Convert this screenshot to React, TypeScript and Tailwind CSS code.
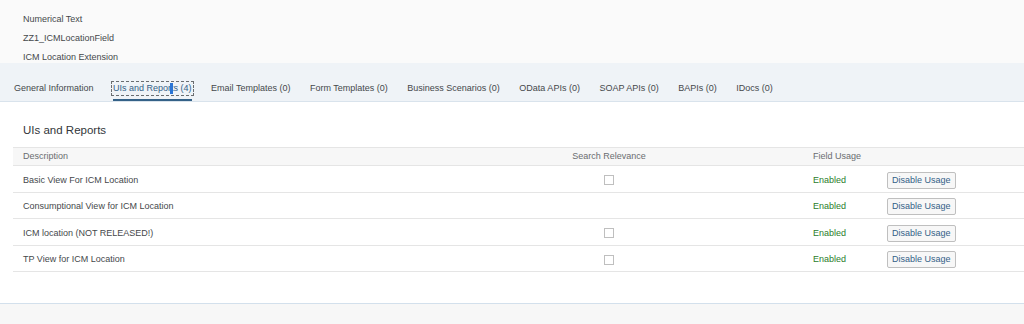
import React from "react";

const TABS = [
  "General Information",
  "UIs and Reports (4)",
  "Email Templates (0)",
  "Form Templates (0)",
  "Business Scenarios (0)",
  "OData APIs (0)",
  "SOAP APIs (0)",
  "BAPIs (0)",
  "IDocs (0)",
];

const ROWS = [
  { name: "Basic View For ICM Location", check: true },
  { name: "Consumptional View for ICM Location", check: false },
  { name: "ICM location (NOT RELEASED!)", check: true },
  { name: "TP View for ICM Location", check: true },
];

export default function App() {
  return (
    <div
      className="w-[1024px] h-[324px] overflow-hidden bg-[#f7f7f7] text-[#45484b]"
      style={{ fontFamily: '"Liberation Sans", Arial, sans-serif' }}
    >
      {/* header info */}
      <div className="bg-[#fafafa] h-[63px] pl-[23px] pt-[14px] flex flex-col gap-[8px] text-[9px] leading-[11px]">
        <div>Numerical Text</div>
        <div>ZZ1_ICMLocationField</div>
        <div>ICM Location Extension</div>
      </div>

      {/* tab bar */}
      <div className="bg-[#eff3f7] h-[39px] border-b border-[#d9e3ec] flex items-end pl-[14px] gap-[19.5px] text-[9px]">
        {TABS.map((t, i) => (
          <div
            key={t}
            className={
              i === 1
                ? "relative h-full flex items-end pb-[4px] text-[#346187] border-b-2 border-[#346187]"
                : "h-full flex items-end pb-[6px] text-[#45484b]"
            }
          >
            {i === 1 ? (
              <span className="relative outline outline-1 outline-dashed outline-[#6a6d70] leading-[13px] px-[1px] -mx-[1px]">
                {t}
                <span className="absolute left-[58px] top-[1px] w-[3px] h-[11px] bg-[#2a74d5]" />
              </span>
            ) : (
              <span className="leading-[13px]">{t}</span>
            )}
          </div>
        ))}
      </div>

      {/* content */}
      <div className="bg-white h-[202px] border-b border-[#d3e0ec] pl-[13px]">
        <div className="pl-[10px] pt-[20px] h-[45px] text-[11.5px] text-[#32363a]">UIs and Reports</div>
        <div className="grid grid-cols-[540px_112px_138px_1fr] h-[19px] bg-[#f7f7f7] border-y border-[#e5e5e5] text-[9px] text-[#6a6d70] items-center">
          <div className="pl-[10px]">Description</div>
          <div className="text-center">Search Relevance</div>
          <div />
          <div className="pl-[10px]">Field Usage</div>
        </div>
        {ROWS.map((r) => (
          <div
            key={r.name}
            className="grid grid-cols-[540px_112px_138px_1fr] h-[26.5px] pt-[3px] border-b border-[#e5e5e5] text-[9px] items-center"
          >
            <div className="pl-[10px]">{r.name}</div>
            <div className="flex justify-center">
              {r.check && <div className="w-[10px] h-[10px] border border-[#bfbfbf] bg-white" />}
            </div>
            <div />
            <div className="pl-[10px] flex items-center">
              <span className="w-[74px] text-[#2b7d2b]">Enabled</span>
              <button className="h-[17px] px-[4px] border border-[#bfbfbf] rounded-[2px] bg-[#f7f7f7] text-[#346187] text-[9px] leading-none">
                Disable Usage
              </button>
            </div>
          </div>
        ))}
      </div>
    </div>
  );
}
